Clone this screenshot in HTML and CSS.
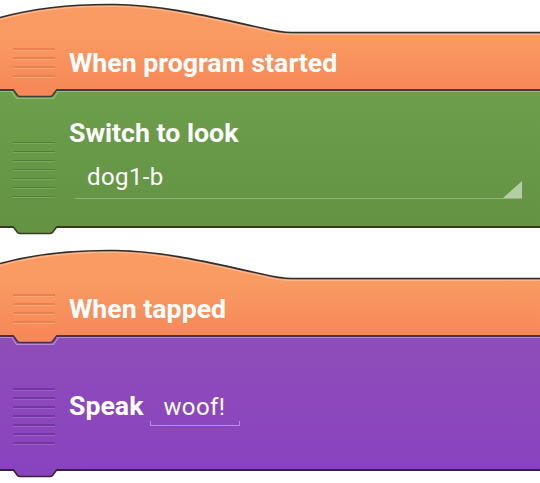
FILE: index.html
```html
<!DOCTYPE html>
<html>
<head>
<meta charset="utf-8">
<link rel="stylesheet" href="styles.css">
</head>
<body>
<div class="canvas">
  <div class="script">
    <div class="brick event">
      <svg class="hat" width="540" height="36" viewBox="0 0 540 36">
        <path class="hat-fill" d="M0,36 L0,17.5 C35,8 75,4 115,4.5 C165,5 215,18 262,28 C274,31 282,32.5 292,32.5 L540,32.5 L540,36 Z"/>
        <path class="hat-glow" d="M0,19.5 C35,10 75,6 115,6.5 C165,7 215,20 262,30 C274,33 282,34.5 292,34.5 L540,34.5"/>
        <path class="hat-edge" d="M0,17.5 C35,8 75,4 115,4.5 C165,5 215,18 262,28 C274,31 282,32.5 292,32.5 L540,32.5"/>
      </svg>
      <div class="body body-hat">
        <div class="handle h4"></div>
        <div class="content">
          <div class="label">When program started</div>
        </div>
      </div>
      <svg class="notch" width="46" height="11" viewBox="0 0 46 11">
        <path class="notch-glow glow-green" d="M0,3 L4.5,9.3 L41.5,9.3 L46,3"/>
        <path class="notch-fill fill-orange" d="M1,0 L5.5,6.5 Q6.5,7.5 8,7.5 L38,7.5 Q39.5,7.5 40.5,6.5 L45,0 Z"/>
        <path class="notch-edge edge-gray" d="M1,0.5 L5.5,6.5 Q6.5,7.5 8,7.5 L38,7.5 Q39.5,7.5 40.5,6.5 L45,0.5"/>
      </svg>
    </div>
    <div class="brick look">
      <div class="body body-look">
        <div class="handle h7"></div>
        <div class="content">
          <div class="label">Switch to look</div>
          <div class="spinner">
            <span class="spinner-text">dog1-b</span>
            <span class="spinner-arrow"></span>
          </div>
        </div>
      </div>
      <svg class="notch" width="46" height="11" viewBox="0 0 46 11">
        <path class="notch-fill fill-green" d="M1,0 L5.5,6.5 Q6.5,7.5 8,7.5 L38,7.5 Q39.5,7.5 40.5,6.5 L45,0 Z"/>
        <path class="notch-edge edge-olive" d="M1,0.5 L5.5,6.5 Q6.5,7.5 8,7.5 L38,7.5 Q39.5,7.5 40.5,6.5 L45,0.5"/>
      </svg>
    </div>
  </div>

  <div class="script">
    <div class="brick event">
      <svg class="hat" width="540" height="36" viewBox="0 0 540 36">
        <path class="hat-fill" d="M0,36 L0,17.5 C35,8 75,4 115,4.5 C165,5 215,18 262,28 C274,31 282,32.5 292,32.5 L540,32.5 L540,36 Z"/>
        <path class="hat-glow" d="M0,19.5 C35,10 75,6 115,6.5 C165,7 215,20 262,30 C274,33 282,34.5 292,34.5 L540,34.5"/>
        <path class="hat-edge" d="M0,17.5 C35,8 75,4 115,4.5 C165,5 215,18 262,28 C274,31 282,32.5 292,32.5 L540,32.5"/>
      </svg>
      <div class="body body-hat body-hat-purple">
        <div class="handle h4"></div>
        <div class="content">
          <div class="label">When tapped</div>
        </div>
      </div>
      <svg class="notch" width="46" height="11" viewBox="0 0 46 11">
        <path class="notch-glow glow-purple" d="M0,3 L4.5,9.3 L41.5,9.3 L46,3"/>
        <path class="notch-fill fill-orange" d="M1,0 L5.5,6.5 Q6.5,7.5 8,7.5 L38,7.5 Q39.5,7.5 40.5,6.5 L45,0 Z"/>
        <path class="notch-edge edge-plum" d="M1,0.5 L5.5,6.5 Q6.5,7.5 8,7.5 L38,7.5 Q39.5,7.5 40.5,6.5 L45,0.5"/>
      </svg>
    </div>
    <div class="brick sound">
      <div class="body body-sound">
        <div class="handle h7"></div>
        <div class="content">
          <div class="row">
            <span class="label">Speak</span>
            <span class="field">woof!</span>
          </div>
        </div>
      </div>
      <svg class="notch" width="46" height="11" viewBox="0 0 46 11">
        <path class="notch-fill fill-purple" d="M1,0 L5.5,6.5 Q6.5,7.5 8,7.5 L38,7.5 Q39.5,7.5 40.5,6.5 L45,0 Z"/>
        <path class="notch-edge edge-dark-plum" d="M1,0.5 L5.5,6.5 Q6.5,7.5 8,7.5 L38,7.5 Q39.5,7.5 40.5,6.5 L45,0.5"/>
      </svg>
    </div>
  </div>
</div>
</body>
</html>
```

FILE: styles.css
```css
* { box-sizing: border-box; }

html, body {
  margin: 0;
  padding: 0;
  background: #ffffff;
}

body {
  font-family: Roboto, "Noto Sans", "Liberation Sans", sans-serif;
  color: #ffffff;
  width: 540px;
  height: 483px;
  overflow: hidden;
}

.canvas {
  display: flex;
  flex-direction: column;
  gap: 18px;
}

.script {
  display: flex;
  flex-direction: column;
}

.brick {
  position: relative;
}

.hat {
  display: block;
}

.hat-fill { fill: #f99b63; }
.hat-glow { fill: none; stroke: #fdb88f; stroke-width: 1.2; }
.hat-edge { fill: none; stroke: #2f2f2f; stroke-width: 1.6; }

.body {
  display: flex;
  align-items: flex-start;
}

.body-hat {
  height: 55px;
  background: linear-gradient(to bottom, #f99b63 0%, #f78858 100%);
  border-bottom: 2px solid #3e3e3e;
}

.body-hat-purple {
  border-bottom-color: #4a2f4f;
}

.body-look {
  height: 137px;
  background: linear-gradient(to bottom, #6c9e4c 0%, #639343 100%);
  border-top: 1.5px solid #8fba76;
  border-bottom: 2px solid #3d3822;
}

.body-sound {
  height: 134px;
  background: linear-gradient(to bottom, #8f4db9 0%, #8943bf 100%);
  border-top: 1.5px solid #b48ad6;
  border-bottom: 2px solid #3d1e36;
}

.handle {
  flex: none;
  width: 42px;
  margin-left: 13px;
}

.h4 {
  height: 36px;
  margin-top: 12px;
}

.h7 {
  height: 63px;
  margin-top: 49.5px;
}

.body-hat .handle {
  background: repeating-linear-gradient(to bottom, #e88150 0, #e88150 1.5px, #fba676 1.5px, #fba676 2.5px, transparent 2.5px, transparent 9px);
}

.body-look .handle {
  background: repeating-linear-gradient(to bottom, #527f38 0, #527f38 1.5px, #79a95d 1.5px, #79a95d 2.5px, transparent 2.5px, transparent 9px);
}

.body-sound .handle {
  background: repeating-linear-gradient(to bottom, #7437a1 0, #7437a1 1.5px, #9d5fca 1.5px, #9d5fca 2.5px, transparent 2.5px, transparent 9px);
}

.content {
  display: flex;
  flex-direction: column;
  margin-left: 14px;
}

.label {
  font-weight: 700;
  font-size: 26.7px;
  line-height: 30px;
  color: #ffffff;
  white-space: nowrap;
}

.body-hat .content { margin-top: 12px; }
.body-look .content { margin-top: 25.5px; }
.body-sound .content { margin-top: 52.5px; }

.spinner {
  position: relative;
  margin-top: 15.5px;
  margin-left: 6px;
  width: 447px;
  padding-left: 12px;
  padding-bottom: 7px;
  border-bottom: 1.5px solid #8fb778;
}

.spinner-text,
.field {
  font-weight: 400;
  font-size: 24px;
  line-height: 28px;
  letter-spacing: 0.4px;
  color: #ffffff;
}

.spinner-text { display: block; }

.spinner-arrow {
  position: absolute;
  right: 0;
  bottom: 0;
  width: 19px;
  height: 17px;
  background: #b5cda6;
  clip-path: polygon(100% 0, 100% 100%, 0 100%);
}

.row {
  display: flex;
  align-items: baseline;
  gap: 7px;
}

.field {
  position: relative;
  display: block;
  width: 90px;
  padding-left: 13px;
  padding-bottom: 5px;
}

.field::after {
  content: "";
  position: absolute;
  left: 0;
  right: 0;
  bottom: 0;
  height: 4px;
  border: 1.5px solid #b791d8;
  border-top: none;
}

.notch {
  position: absolute;
  left: 12px;
  top: calc(100% - 2px);
  z-index: 2;
  overflow: visible;
}

.notch-glow { fill: none; stroke-width: 1.2; }
.glow-green { stroke: #8fba76; }
.glow-purple { stroke: #b48ad6; }

.fill-orange { fill: #f78858; }
.fill-green { fill: #639343; }
.fill-purple { fill: #8943bf; }

.notch-edge { fill: none; stroke-width: 1.6; }
.edge-gray { stroke: #3e3e3e; }
.edge-olive { stroke: #3d3822; }
.edge-plum { stroke: #4a2f4f; }
.edge-dark-plum { stroke: #3d1e36; }
```
